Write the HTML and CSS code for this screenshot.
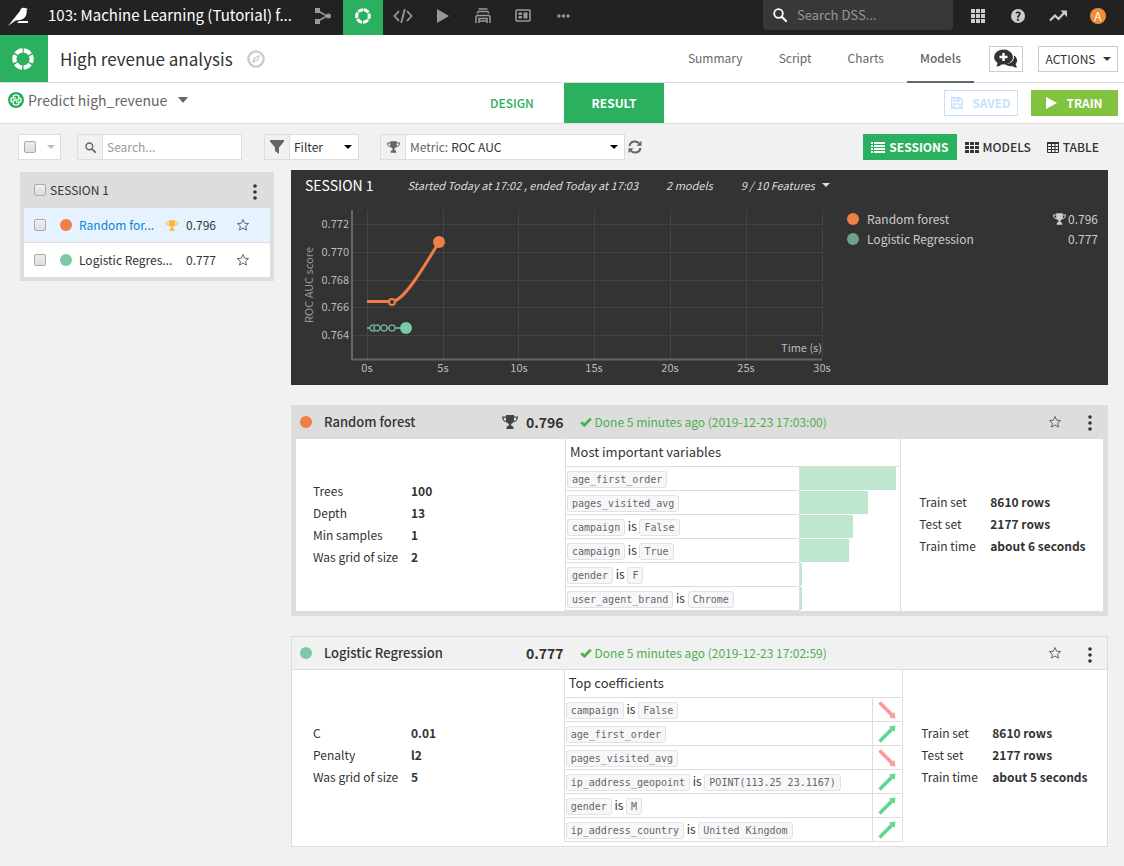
FILE: index.html
```html
<!DOCTYPE html>
<html lang="en">
<head>
    <meta charset="UTF-8">
    <meta name="viewport" content="width=device-width, initial-scale=1.0">
    <title>High revenue analysis</title>
    <link rel="stylesheet" href="styles.css">
</head>
<body>
<!-- icons -->
<svg class="sprite" aria-hidden="true">
    <symbol id="ring" viewBox="0 0 24 24"><circle cx="12" cy="12" r="9.4" fill="none" stroke="currentColor" stroke-width="4.6" stroke-dasharray="8.2 1.644" stroke-dashoffset="-0.8" transform="rotate(-90 12 12)"/></symbol>
    <symbol id="caret" viewBox="0 0 8 4"><path d="M0 0h8L4 4z" fill="currentColor"/></symbol>
    <symbol id="star" viewBox="0 0 14 14"><path d="M7 1.5l1.600 3.700 4 .4-3 2.600.9 3.900L7 10l-3.500 2.100.9-3.900-3-2.600 4-.4z" fill="none" stroke="currentColor"/></symbol>
    <symbol id="trophy" viewBox="0 0 16 14"><path d="M4 0h8v1.500h4c0 3.500-1.500 5.500-4.700 5.800C10.500 8.500 9 8.800 9 10c0 1 2.500.8 2.500 3v1h-7v-1C4.500 10.800 7 11 7 10c0-1.200-1.500-1.500-2.300-2.700C1.500 7 0 5 0 1.500h4zM1.300 2.700c.2 1.800 1.100 3 2.700 3.300C3.800 5 4 4 4 2.700zM14.700 2.700H12C12 4 12.200 5 12 6c1.600-.3 2.500-1.500 2.700-3.300z" fill="currentColor" fill-rule="evenodd"/></symbol>
    <symbol id="dots" viewBox="0 0 4 16"><g fill="currentColor"><circle cx="2" cy="2" r="1.800"/><circle cx="2" cy="8" r="1.800"/><circle cx="2" cy="14" r="1.800"/></g></symbol>
    <symbol id="lens" viewBox="0 0 14 14"><path d="M9 9l4 4" stroke="currentColor" stroke-width="2.200" stroke-linecap="round"/><circle cx="5.500" cy="5.500" r="4.300" fill="none" stroke="currentColor" stroke-width="1.800"/></symbol>
    <symbol id="check" viewBox="0 0 12 10"><path d="M1.200 5.200l3.200 3L10.800 1.600" fill="none" stroke="currentColor" stroke-width="2.800"/></symbol>
    <symbol id="play" viewBox="0 0 12 14"><path d="M0 0l12 7-12 7z" fill="currentColor"/></symbol>
    <symbol id="arrow" viewBox="0 0 18 18"><path d="M1.500 16.500L14 4" stroke="currentColor" stroke-width="3.600"/><path d="M11 1.500L17.500.5l-1 6.500z" fill="currentColor"/></symbol>
</svg>

<!-- top bar -->
<header class="topbar">
    <a class="logo" href="#" aria-label="Home"><svg width="22" height="20" viewBox="0 0 22 20"><path d="M0 19L12 4C12.500 1 15 0 17 1l3 1-1.500 1C19.500 8 17 12 12 13L7.500 13.500z" fill="#fff"/><path d="M11 14h9v2H9z" fill="#fff"/></svg></a>
    <a class="project" href="#">103: Machine Learning (Tutorial) f...</a>
    <nav class="nav">
        <a href="#" aria-label="Flow"><svg width="16" height="16" viewBox="0 0 16 16"><path d="M3 3l9 5-9 5" fill="none" stroke="currentColor" stroke-width="1.500"/><path d="M0 0h5v5H0zM0 11h5v5H0z" fill="currentColor"/><circle cx="13.500" cy="8" r="2.500" fill="currentColor"/></svg></a>
        <a href="#" class="active" aria-label="Analyses"><svg width="16" height="16"><use href="#ring"/></svg></a>
        <a href="#" aria-label="Notebooks"><svg width="20" height="14" viewBox="0 0 20 14" fill="none" stroke="currentColor" stroke-width="1.800"><path d="M6 2L1.500 7 6 12M14 2l4.500 5-4.500 5M11.800 0L8.200 14"/></svg></a>
        <a href="#" aria-label="Jobs"><svg width="12" height="14"><use href="#play"/></svg></a>
        <a href="#" aria-label="Automation"><svg width="16" height="16" viewBox="0 0 16 16" fill="none" stroke="currentColor" stroke-width="1.500"><path d="M3.500 1h9M2.500 5.500v-1l1-1h9l1 1v1M1 15V8.500L2 7.500h12l1 1V15M4 15v-4.500h8V15M4 13h8"/></svg></a>
        <a href="#" aria-label="Dashboards"><svg width="16" height="13" viewBox="0 0 16 13"><rect x="1" y="1" width="14" height="11" rx="1" fill="none" stroke="currentColor" stroke-width="1.600"/><path d="M3.500 3.500H7v2.500H3.500zM3.500 7H7v2.500H3.500zM8.500 3.500h4v6h-4z" fill="currentColor"/></svg></a>
        <a href="#" aria-label="More"><svg width="13" height="4" viewBox="0 0 13 4" fill="currentColor"><circle cx="2" cy="2" r="1.700"/><circle cx="6.500" cy="2" r="1.700"/><circle cx="11" cy="2" r="1.700"/></svg></a>
    </nav>
    <label class="dss-search">
        <svg width="14" height="14"><use href="#lens"/></svg>
        <input type="search" placeholder="Search DSS..." aria-label="Search DSS">
    </label>
    <nav class="nav tools">
        <a href="#" aria-label="Applications"><svg width="14" height="14" viewBox="0 0 14 14"><path d="M0 0h4v4H0zM5 0h4v4H5zM10 0h4v4h-4zM0 5h4v4H0zM5 5h4v4H5zM10 5h4v4h-4zM0 10h4v4H0zM5 10h4v4H5zM10 10h4v4h-4z" fill="currentColor"/></svg></a>
        <a href="#" class="help" aria-label="Help">?</a>
        <a href="#" aria-label="Activity"><svg width="18" height="12" viewBox="0 0 18 12"><path d="M1 10.500l5-5 3.500 3.500L15 3" fill="none" stroke="currentColor" stroke-width="2.200"/><path d="M11.500.5H18V7z" fill="currentColor"/></svg></a>
        <a href="#" class="avatar" aria-label="Profile">A</a>
    </nav>
</header>

<!-- analysis title -->
<div class="titlebar">
    <span class="badge"><svg width="22" height="22"><use href="#ring"/></svg></span>
    <h1>High revenue analysis</h1>
    <svg class="compass" width="18" height="18" viewBox="0 0 18 18"><circle cx="9" cy="9" r="7.600" fill="none" stroke="currentColor" stroke-width="2.400"/><path d="M13 4.800l-1.800 5.700-6.200 2.700 1.800-5.700zM8.200 8.200v2.700l2.200-1.500V6.700z" fill="currentColor" fill-rule="evenodd"/></svg>
    <nav class="tabs">
        <a href="#">Summary</a>
        <a href="#">Script</a>
        <a href="#">Charts</a>
        <a href="#" class="active">Models</a>
    </nav>
    <button class="btn discuss" aria-label="Discussions"><svg width="24" height="20" viewBox="0 0 24 20"><path d="M20 6.500c3.500 2 4 6.500 1.500 8.500l1.500 3.500c-2 0-3.500-.5-4.500-1.500-3 .6-6-.2-7.500-2 5.500.2 9.500-3 9-8.500z" fill="#333"/><ellipse cx="9.500" cy="8" rx="9.500" ry="7.500" fill="#333"/><path d="M4 13l-1.500 4.500c2.500 0 4.500-1 6-3z" fill="#333"/><path d="M9.500 4v8M5.500 8h8" stroke="#fff" stroke-width="2.400"/></svg></button>
    <button class="btn actions">ACTIONS <svg width="8" height="4"><use href="#caret"/></svg></button>
</div>

<!-- design / result -->
<div class="modebar">
    <div class="side">
        <button class="task">
            <svg width="16" height="16" viewBox="0 0 16 16"><circle cx="8" cy="8" r="8" fill="#2ab05e"/><path d="M5.300 5.800V4.500C5.300 3.600 6 3.200 7 3.200h2c1 0 1.700.4 1.700 1.300v2C10.700 7.500 10 8 9 8H7c-1 0-1.700.5-1.700 1.500v2c0 .9.700 1.300 1.700 1.300h2c1 0 1.700-.4 1.700-1.300v-1.300M8 5.800H4.500C3.500 5.800 3 6.800 3 8s.5 2.200 1.500 2.200M8 10.200h3.500c1 0 1.500-1 1.500-2.200s-.5-2.200-1.500-2.200" fill="none" stroke="#fff" stroke-width="1.300"/></svg>
            Predict high_revenue
            <svg class="task-caret" width="10" height="6" viewBox="0 0 8 4" preserveAspectRatio="none"><path d="M0 0h8L4 4z" fill="currentColor"/></svg>
        </button>
    </div>
    <a href="#" class="mode">DESIGN</a>
    <a href="#" class="mode active">RESULT</a>
    <div class="side right">
        <button class="btn saved" disabled><svg width="12" height="12" viewBox="0 0 12 12"><path d="M.7.7H9l2.300 2.300v8.300H.7zM3 .7V4h5V.7M3 11.300V7h6v4.300" fill="none" stroke="currentColor" stroke-width="1.400"/><path d="M5.800 1h2v2.500h-2z" fill="currentColor"/></svg> SAVED</button>
        <button class="btn train"><svg width="11" height="12" viewBox="0 0 12 14" preserveAspectRatio="none"><path d="M0 0l12 7-12 7z" fill="currentColor"/></svg> TRAIN</button>
    </div>
</div>

<!-- filters -->
<div class="toolbar">
    <div class="box select-all">
        <input type="checkbox" aria-label="Select all models">
        <svg width="8" height="4"><use href="#caret"/></svg>
    </div>
    <div class="box search">
        <label class="addon" for="search"><svg width="11" height="11"><use href="#lens"/></svg></label>
        <input type="text" id="search" placeholder="Search...">
    </div>
    <div class="box filter">
        <label class="addon" for="filter"><svg width="14" height="14" viewBox="0 0 14 14"><path d="M0 0h14v1.500L9 7.500V14l-4-3V7.500L0 1.500z" fill="#666"/></svg></label>
        <select id="filter" aria-label="Filter"><option>Filter</option></select>
        <svg width="8" height="4"><use href="#caret"/></svg>
    </div>
    <div class="box metric">
        <span class="addon"><svg width="13" height="12"><use href="#trophy"/></svg></span>
        <label for="metric">Metric:</label>
        <select id="metric"><option>ROC AUC</option></select>
        <svg width="8" height="4"><use href="#caret"/></svg>
    </div>
    <button class="refresh" aria-label="Refresh"><svg width="14" height="14" viewBox="0 0 14 14"><path d="M1.500 6C2 3.200 4.200 1.500 7 1.500c1.700 0 3 .6 4.200 1.900M12.500 8C12 10.800 9.800 12.500 7 12.500c-1.700 0-3-.6-4.200-1.900" fill="none" stroke="currentColor" stroke-width="2"/><path d="M13.500.8v5H8.600zM.5 13.200v-5h4.900z" fill="currentColor"/></svg></button>
    <nav class="views">
        <a href="#" class="active"><svg width="14" height="11" viewBox="0 0 14 11"><path d="M0 0h2v2H0zM3 0h11v2H3zM0 3h2v2H0zM3 3h11v2H3zM0 6h2v2H0zM3 6h11v2H3zM0 9h2v2H0zM3 9h11v2H3z" fill="currentColor"/></svg>SESSIONS</a>
        <a href="#"><svg width="14" height="11" viewBox="0 0 14 11"><path d="M0 0h4v3H0zM5 0h4v3H5zM10 0h4v3h-4zM0 4h4v3H0zM5 4h4v3H5zM10 4h4v3h-4zM0 8h4v3H0zM5 8h4v3H5zM10 8h4v3h-4z" fill="currentColor"/></svg>MODELS</a>
        <a href="#"><svg width="12" height="11" viewBox="0 0 12 11"><path d="M.5 1.500h11v9H.5zM.5 4.500h11M.5 7.500h11M4.500 1.500v9M8 1.500v9" fill="none" stroke="currentColor"/><path d="M0 0h12v2H0z" fill="currentColor"/></svg>TABLE</a>
    </nav>
</div>

<div class="content">
    <!-- sessions list -->
    <aside class="sessions">
        <div class="session-head">
            <input type="checkbox" id="s1">
            <label for="s1">SESSION 1</label>
            <button class="icon-btn" aria-label="Session actions"><svg width="4" height="16"><use href="#dots"/></svg></button>
        </div>
        <div class="session-item selected">
            <input type="checkbox" aria-label="Random forest">
            <i class="dot orange"></i>
            <a href="#" class="name">Random for...</a>
            <svg class="gold" width="12" height="11"><use href="#trophy"/></svg>
            <span class="score">0.796</span>
            <button class="icon-btn" aria-label="Star"><svg width="14" height="14"><use href="#star"/></svg></button>
        </div>
        <div class="session-item">
            <input type="checkbox" aria-label="Logistic Regression">
            <i class="dot green"></i>
            <a href="#" class="name">Logistic Regres...</a>
            <span class="score">0.777</span>
            <button class="icon-btn" aria-label="Star"><svg width="14" height="14"><use href="#star"/></svg></button>
        </div>
    </aside>

    <main class="results">
        <!-- session chart -->
        <section class="session">
            <div class="session-info">
                <h2>SESSION 1</h2>
                <em class="when">Started Today at 17:02 , ended Today at 17:03</em>
                <em class="count">2 models</em>
                <em>9 / 10 Features</em>
                <svg width="8" height="4"><use href="#caret"/></svg>
            </div>
            <div class="session-body">
                <svg class="chart" width="545" height="182" viewBox="0 0 545 182">
                    <path class="grid" d="M62 24.500H531M62 52.500H531M62 80.500H531M62 107.500H531M62 135.500H531M76.500 10V159M152.500 10V159M227.500 10V159M303.500 10V159M379.500 10V159M455.500 10V159M531.500 10V159"/>
                    <path class="axis" d="M61 10V159.500H531"/>
                    <g text-anchor="end">
                        <text x="58" y="28">0.772</text>
                        <text x="58" y="56">0.770</text>
                        <text x="58" y="84">0.768</text>
                        <text x="58" y="111">0.766</text>
                        <text x="58" y="139">0.764</text>
                        <text x="531" y="152">Time (s)</text>
                    </g>
                    <g text-anchor="middle">
                        <text x="76" y="172">0s</text>
                        <text x="152" y="172">5s</text>
                        <text x="228" y="172">10s</text>
                        <text x="303" y="172">15s</text>
                        <text x="379" y="172">20s</text>
                        <text x="455" y="172">25s</text>
                        <text x="531" y="172">30s</text>
                        <text class="ylabel" transform="translate(22 85) rotate(-90)">ROC AUC score</text>
                    </g>
                    <path d="M76 101.500H101C112 101.500 130 72 148 42" fill="none" stroke="#f17e46" stroke-width="3"/>
                    <circle cx="101" cy="102" r="3" fill="#333" stroke="#f17e46" stroke-width="2"/>
                    <circle cx="148" cy="42" r="6" fill="#f17e46"/>
                    <path d="M76 128H115" stroke="#6aa58b" stroke-width="2"/>
                    <g fill="#333" stroke="#6aa58b" stroke-width="1.500">
                        <circle cx="82" cy="128" r="3"/>
                        <circle cx="86" cy="128" r="3"/>
                        <circle cx="93" cy="128" r="3"/>
                        <circle cx="101" cy="128" r="3"/>
                    </g>
                    <circle cx="115" cy="128" r="6" fill="#7bc8a4"/>
                </svg>
                <ul class="legend">
                    <li><i class="dot orange"></i><span>Random forest</span><svg width="13" height="12"><use href="#trophy"/></svg>0.796</li>
                    <li><i class="dot dim"></i><span>Logistic Regression</span>0.777</li>
                </ul>
            </div>
        </section>

        <!-- random forest -->
        <section class="model current">
            <header>
                <i class="dot orange"></i>
                <h3>Random forest</h3>
                <svg class="trophy" width="16" height="14"><use href="#trophy"/></svg>
                <strong class="score">0.796</strong>
                <span class="status"><svg width="12" height="10"><use href="#check"/></svg> Done 5 minutes ago (2019-12-23 17:03:00)</span>
                <button class="icon-btn" aria-label="Star"><svg width="14" height="14"><use href="#star"/></svg></button>
                <button class="icon-btn" aria-label="Model actions"><svg width="4" height="16"><use href="#dots"/></svg></button>
            </header>
            <div class="model-body">
                <dl class="params">
                    <dt>Trees</dt><dd>100</dd>
                    <dt>Depth</dt><dd>13</dd>
                    <dt>Min samples</dt><dd>1</dd>
                    <dt>Was grid of size</dt><dd>2</dd>
                </dl>
                <div class="vars">
                    <h4>Most important variables</h4>
                    <table>
                        <tr><td><code>age_first_order</code></td><td class="bar"><div style="width: 97%"></div></td></tr>
                        <tr><td><code>pages_visited_avg</code></td><td class="bar"><div style="width: 68%"></div></td></tr>
                        <tr><td><code>campaign</code> is <code>False</code></td><td class="bar"><div style="width: 53%"></div></td></tr>
                        <tr><td><code>campaign</code> is <code>True</code></td><td class="bar"><div style="width: 49%"></div></td></tr>
                        <tr><td><code>gender</code> is <code>F</code></td><td class="bar"><div style="width: 2%"></div></td></tr>
                        <tr><td><code>user_agent_brand</code> is <code>Chrome</code></td><td class="bar"><div style="width: 2%"></div></td></tr>
                    </table>
                </div>
                <dl class="stats">
                    <dt>Train set</dt><dd>8610 rows</dd>
                    <dt>Test set</dt><dd>2177 rows</dd>
                    <dt>Train time</dt><dd>about 6 seconds</dd>
                </dl>
            </div>
        </section>

        <!-- logistic regression -->
        <section class="model">
            <header>
                <i class="dot green"></i>
                <h3>Logistic Regression</h3>
                <strong class="score">0.777</strong>
                <span class="status"><svg width="12" height="10"><use href="#check"/></svg> Done 5 minutes ago (2019-12-23 17:02:59)</span>
                <button class="icon-btn" aria-label="Star"><svg width="14" height="14"><use href="#star"/></svg></button>
                <button class="icon-btn" aria-label="Model actions"><svg width="4" height="16"><use href="#dots"/></svg></button>
            </header>
            <div class="model-body">
                <dl class="params">
                    <dt>C</dt><dd>0.01</dd>
                    <dt>Penalty</dt><dd>l2</dd>
                    <dt>Was grid of size</dt><dd>5</dd>
                </dl>
                <div class="vars">
                    <h4>Top coefficients</h4>
                    <table>
                        <tr><td><code>campaign</code> is <code>False</code></td><td class="coef down"><svg width="18" height="18"><use href="#arrow"/></svg></td></tr>
                        <tr><td><code>age_first_order</code></td><td class="coef"><svg width="18" height="18"><use href="#arrow"/></svg></td></tr>
                        <tr><td><code>pages_visited_avg</code></td><td class="coef down"><svg width="18" height="18"><use href="#arrow"/></svg></td></tr>
                        <tr><td><code>ip_address_geopoint</code> is <code>POINT(113.25 23.1167)</code></td><td class="coef"><svg width="18" height="18"><use href="#arrow"/></svg></td></tr>
                        <tr><td><code>gender</code> is <code>M</code></td><td class="coef"><svg width="18" height="18"><use href="#arrow"/></svg></td></tr>
                        <tr><td><code>ip_address_country</code> is <code>United Kingdom</code></td><td class="coef"><svg width="18" height="18"><use href="#arrow"/></svg></td></tr>
                    </table>
                </div>
                <dl class="stats">
                    <dt>Train set</dt><dd>8610 rows</dd>
                    <dt>Test set</dt><dd>2177 rows</dd>
                    <dt>Train time</dt><dd>about 5 seconds</dd>
                </dl>
            </div>
        </section>
    </main>
</div>
</body>
</html>
```

FILE: styles.css
```css
* {
    box-sizing: border-box;
}
body {
    margin: 0;
    background: #f1f1f1;
    color: #333;
    font-family: "Source Sans Pro", "Noto Sans CJK SC", sans-serif;
    font-size: 12px;
    line-height: 20px;
}
a {
    color: inherit;
    text-decoration: none;
}
svg {
    display: block;
    flex: none;
}
h1, h2, h3, h4, dl, dd, ul {
    margin: 0;
    padding: 0;
}
button, input, select {
    font: inherit;
    color: inherit;
    margin: 0;
    padding: 0;
    border: 0;
    background: none;
}
input, select {
    min-width: 0;
    outline: none;
    appearance: none;
}
input::placeholder {
    color: #999;
    opacity: 1;
}
input[type="checkbox"] {
    width: 12px;
    height: 12px;
    flex: none;
    border: 1px solid #aaa;
    border-radius: 2px;
    background: linear-gradient(#eee, #ddd);
}
.sprite {
    position: absolute;
    width: 0;
    height: 0;
}

/* top bar */
.topbar {
    display: flex;
    height: 35px;
    background: #222;
    color: #fff;
}
.logo {
    width: 48px;
    padding: 7px 0 0 8px;
}
.project {
    width: 255px;
    font-size: 15px;
    line-height: 30px;
    white-space: nowrap;
}
.nav {
    display: flex;
    flex: 1;
    color: #999;
}
.nav a {
    width: 40px;
    height: 35px;
    padding-bottom: 4px;
    display: flex;
    align-items: center;
    justify-content: center;
}
.nav .active {
    background: #2ab05e;
    color: #fff;
}
.dss-search {
    display: flex;
    align-items: center;
    gap: 10px;
    width: 190px;
    height: 30px;
    padding: 0 10px;
    background: #383838;
    border-radius: 0 0 4px 4px;
}
.dss-search input {
    flex: 1;
    font-size: 13px;
}
.tools {
    flex: none;
    padding: 0 6px 0 5px;
    color: #ccc;
}
.nav .help, .nav .avatar {
    width: 16px;
    height: 16px;
    margin: 8px 12px;
    padding: 0;
    border-radius: 50%;
    background: #ccc;
    color: #222;
    font-size: 12px;
    font-weight: bold;
}
.nav .help {
    width: 14px;
    height: 14px;
    margin: 9px 13px;
}
.nav .avatar {
    background: #f28c38;
    color: #fff;
    font-weight: normal;
}

/* title bar */
.titlebar {
    display: flex;
    align-items: center;
    height: 48px;
    padding-right: 6px;
    background: #fff;
    border-bottom: 1px solid #ddd;
}
.badge {
    display: flex;
    align-items: center;
    justify-content: center;
    width: 48px;
    height: 47px;
    padding-right: 2px;
    background: #2ab05e;
    color: #fff;
}
.titlebar h1 {
    margin: 0 14px 0 12px;
    font-size: 17px;
    font-weight: normal;
}
.compass {
    color: #ccc;
}
.tabs {
    display: flex;
    gap: 10px;
    margin: 0 15px 0 auto;
    color: #666;
}
.tabs a {
    height: 48px;
    padding: 0 13px;
    line-height: 46px;
}
.tabs .active {
    border-bottom: 2px solid #666;
    font-weight: 500;
}
.btn {
    display: flex;
    align-items: center;
    justify-content: center;
    gap: 7px;
    height: 26px;
    padding: 0 7px;
    background: #fff;
    border: 1px solid #ccc;
    font-size: 12px;
    white-space: nowrap;
}
.discuss {
    width: 34px;
    margin-right: 15px;
    padding: 0;
}
.actions {
    width: 80px;
}

/* design / result */
.modebar {
    display: flex;
    gap: 2px;
    height: 41px;
    padding: 0 6px 0 8px;
    background: #fff;
    border-bottom: 1px solid #ddd;
}
.side {
    display: flex;
    flex: 1;
    align-items: center;
}
.right {
    justify-content: flex-end;
    gap: 13px;
}
.task {
    display: flex;
    align-items: center;
    gap: 4px;
    padding-bottom: 6px;
    color: #666;
    font-size: 14px;
}
.task-caret {
    margin-left: 7px;
}
.mode {
    width: 100px;
    line-height: 40px;
    text-align: center;
    color: #2ab05e;
    font-weight: 500;
}
.mode.active {
    background: #2ab05e;
    color: #fff;
    font-weight: bold;
}
.saved {
    width: 74px;
    gap: 9px;
    border-color: #c6e1ff;
    color: #c6e1ff;
    font-weight: bold;
}
.train {
    width: 87px;
    gap: 9px;
    border: 0;
    background: #81c241;
    color: #fff;
    font-weight: bold;
}

/* toolbar */
.toolbar {
    display: flex;
    align-items: center;
    padding: 10px 16px 10px 18px;
}
.box {
    display: flex;
    align-items: center;
    height: 26px;
    padding-right: 6px;
    background: #fff;
    border: 1px solid #ddd;
    color: #000;
}
.box select, .box #search {
    flex: 1;
}
.box select {
    color: #333;
}
.select-all {
    width: 43px;
    padding: 0 5px;
    justify-content: space-between;
    color: #bbb;
}
.search {
    width: 165px;
    margin: 0 22px 0 16px;
}
.filter {
    width: 95px;
    margin-right: 21px;
}
.metric {
    width: 245px;
    margin-right: 3px;
}
.metric label {
    margin-right: 3px;
    color: #666;
}
.addon {
    display: flex;
    align-items: center;
    justify-content: center;
    width: 25px;
    height: 24px;
    margin-right: 4px;
    background: #f1f1f1;
    border-right: 1px solid #ddd;
    color: #666;
}
.refresh {
    color: #666;
}
.views {
    display: flex;
    margin-left: auto;
    padding-right: 1px;
}
.views a {
    display: flex;
    align-items: center;
    gap: 4px;
    height: 26px;
    padding: 0 8px;
    font-weight: 500;
}
.views .active {
    background: #2ab05e;
    color: #fff;
    font-weight: bold;
}

/* sessions list */
.content {
    display: flex;
    align-items: flex-start;
    gap: 17px;
    padding: 0 16px 19px 20px;
}
.sessions {
    width: 254px;
    flex: none;
    margin-top: 2px;
    padding: 0 4px 4px;
    background: #ddd;
}
.session-head, .session-item {
    display: flex;
    align-items: center;
    height: 36px;
    padding: 0 20px 0 10px;
}
.session-head label {
    flex: 1;
    margin-left: 4px;
}
.session-head .icon-btn {
    margin-right: -7px;
    padding-top: 4px;
}
.session-item {
    height: 34px;
    background: #fff;
}
.session-item.selected {
    height: 35px;
    background: #e6f2ff;
    border-bottom: 1px solid #ddd;
}
.selected .name {
    color: #0a85d0;
}
.session-item .dot {
    margin: 0 7px 0 14px;
}
.name {
    flex: 1;
    white-space: nowrap;
}
.gold {
    margin-right: 8px;
    color: #fab73a;
}
.session-item .score {
    width: 50px;
}
.icon-btn {
    color: #333;
}
.icon-btn [width="14"] {
    color: #666;
}
.dot {
    width: 12px;
    height: 12px;
    flex: none;
    border-radius: 50%;
}
.orange {
    background: #f17e46;
}
.green {
    background: #7bc8a4;
}
.dim {
    background: #6aa58b;
}

/* session chart */
.results {
    flex: 1;
    min-width: 0;
    display: grid;
    gap: 20px;
}
.session {
    background: #333;
    color: #ddd;
    padding-bottom: 3px;
}
.session-info {
    display: flex;
    align-items: center;
    height: 30px;
    padding-left: 14px;
    font-size: 11px;
}
.session-info h2 {
    margin-right: 34px;
    color: #fff;
    font-size: 14px;
    font-weight: normal;
}
.session-info em {
    margin-right: 28px;
}
.session-info em:last-of-type {
    margin-right: 7px;
}
.session-body {
    display: flex;
}
.chart text {
    fill: #bbb;
    font-size: 11px;
}
.chart .ylabel {
    fill: #999;
}
.grid {
    fill: none;
    stroke: #444;
}
.axis {
    fill: none;
    stroke: #666;
    stroke-width: 2;
}
.legend {
    flex: 1;
    padding: 9px 10px 0 11px;
    list-style: none;
    color: #ccc;
}
.legend li {
    display: flex;
    align-items: center;
    gap: 2px;
}
.legend span {
    flex: 1;
    margin-left: 6px;
}

/* model cards */
.model {
    background: #fff;
    border: 1px solid #ddd;
}
.model header {
    display: flex;
    align-items: center;
    height: 33px;
    padding: 0 15px 0 8px;
    background: #f1f1f1;
    border-bottom: 1px solid #ddd;
}
.model h3 {
    flex: none;
    width: 178px;
    margin-left: 12px;
    font-size: 13px;
    font-weight: 500;
}
.model .score {
    margin: 0 16px 0 auto;
    font-size: 14px;
}
.trophy {
    margin-right: 8px;
    color: #444;
}
.model h3 + .score {
    margin-left: 24px;
}
.trophy + .score {
    margin-left: 0;
}
.status {
    display: flex;
    align-items: center;
    gap: 3px;
    margin-right: auto;
    color: #4caf50;
}
.model .icon-btn + .icon-btn {
    margin-left: 26px;
    padding-top: 3px;
}
.model-body {
    display: grid;
    grid-template-columns: 4fr 5fr 3fr;
    padding-bottom: 4px;
}
.params, .stats {
    display: grid;
    grid-template-columns: 98px auto;
    align-content: center;
    justify-content: start;
    line-height: 22px;
    padding: 0 0 2px 21px;
}
.stats {
    grid-template-columns: 71px auto;
    padding-left: 18px;
    white-space: nowrap;
}
dd {
    font-weight: bold;
}
.vars {
    border: solid #ddd;
    border-width: 0 1px;
    padding-right: 1px;
}
.vars h4 {
    height: 28px;
    padding-left: 4px;
    border-bottom: 1px solid #ddd;
    font-size: 13px;
    font-weight: normal;
    line-height: 25px;
}
table {
    width: 100%;
    border-collapse: separate;
    border-spacing: 0;
}
td {
    height: 24px;
    padding: 0 1px;
    border-bottom: 1px solid #ddd;
    font-size: 12px;
    line-height: 20px;
}
code {
    padding: 2px 4px;
    background: #f7f7f9;
    border: 1px solid #e1e1e8;
    border-radius: 3px;
    color: #666;
    font-family: Consolas, "DejaVu Sans Mono", monospace;
    font-size: 10px;
}
.bar {
    width: 100px;
    padding: 0;
    border-left: 1px solid #ddd;
    border-bottom: 1px solid #fff;
}
.bar div {
    height: 23px;
    background: #bfe7d0;
}
.coef {
    width: 28px;
    padding: 0 5px;
    border-left: 1px solid #ddd;
    color: #5bd991;
}
.down {
    color: #fc9a94;
}
.down svg {
    transform: scaleY(-1);
}

/* selected model */
.current {
    border-width: 0 5px 5px;
}
.current header {
    height: 34px;
    padding: 0 11px 0 4px;
    background: #ddd;
}
.current .model-body {
    padding-bottom: 0;
}
.current .params {
    padding-left: 17px;
}
```
